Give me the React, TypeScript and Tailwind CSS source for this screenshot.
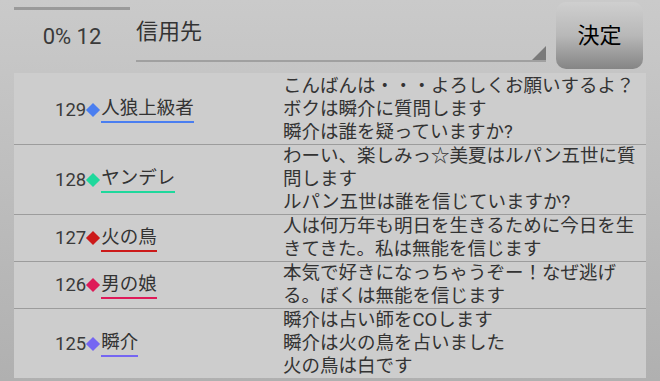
const rows = [
  {
    no: 129,
    name: "人狼上級者",
    color: "#4a7ef0",
    lines: ["こんばんは・・・よろしくお願いするよ？", "ボクは瞬介に質問します", "瞬介は誰を疑っていますか?"],
  },
  {
    no: 128,
    name: "ヤンデレ",
    color: "#1fd89c",
    lines: ["わーい、楽しみっ☆美夏はルパン五世に質問します", "ルパン五世は誰を信じていますか?"],
  },
  {
    no: 127,
    name: "火の鳥",
    color: "#cc1a1a",
    lines: ["人は何万年も明日を生きるために今日を生きてきた。私は無能を信じます"],
  },
  {
    no: 126,
    name: "男の娘",
    color: "#de1a58",
    lines: ["本気で好きになっちゃうぞー！なぜ逃げる。ぼくは無能を信じます"],
  },
  {
    no: 125,
    name: "瞬介",
    color: "#7566f2",
    lines: ["瞬介は占い師をCOします", "瞬介は火の鳥を占いました", "火の鳥は白です"],
  },
];

export default function App() {
  return (
    <div
      className="w-[660px] h-[381px] overflow-hidden bg-gradient-to-b from-[#cacaca] to-[#b0b0b0] text-[#333]"
      style={{ fontFamily: '"Roboto", "Noto Sans CJK JP", sans-serif' }}
    >
      {/* header */}
      <div className="flex items-start h-[73px] pl-[14px]">
        <div className="w-[116px] flex flex-col">
          <div className="h-[3px] mt-[7px] bg-[#9a9a9a]" />
          <div className="mt-[13px] text-center text-[22px] leading-[28px] text-[#3a3a3a]">0% 12</div>
        </div>
        <div className="relative ml-[6px] w-[410px] h-[62px] border-b-2 border-[#a0a0a0]">
          <div className="pt-[17px] text-[22px] leading-[30px] text-[#333]">信用先</div>
          <div className="absolute right-0 bottom-0 w-0 h-0 border-l-[14px] border-l-transparent border-b-[14px] border-b-[#7a7a7a]" />
        </div>
        <button className="ml-[10px] mt-[2px] w-[87px] h-[67px] rounded-[10px] bg-gradient-to-b from-[#cfcfcf] via-[#b8b8b8] to-[#858585] text-[22px] text-black flex items-center justify-center">
          決定
        </button>
      </div>

      {/* list */}
      <div className="mx-[14px] h-[305px] bg-[#cdcdcd]">
        {rows.map((r, i) => (
          <div
            key={r.no}
            className={`flex items-center ${i === 0 ? "pt-[2px]" : ""} ${i < rows.length - 1 ? "border-b border-[#9c9c9c]" : ""}`}
          >
            <div className="w-[269px] pl-[41px] flex items-center text-[18.5px] leading-[24px]">
              <span className="text-[#3a3a3a]">{r.no}</span>
              <span
                className="inline-block w-[10px] h-[10px] rotate-45 mx-[2px]"
                style={{ backgroundColor: r.color }}
              />
              <span className="border-b-2 pb-[1px] ml-[1px]" style={{ borderColor: r.color }}>
                {r.name}
              </span>
            </div>
            <div className="w-[362px] text-[18.5px] leading-[23px] text-[#333]">
              {r.lines.map((l, j) => (
                <div key={j}>{l}</div>
              ))}
            </div>
          </div>
        ))}
      </div>
    </div>
  );
}
